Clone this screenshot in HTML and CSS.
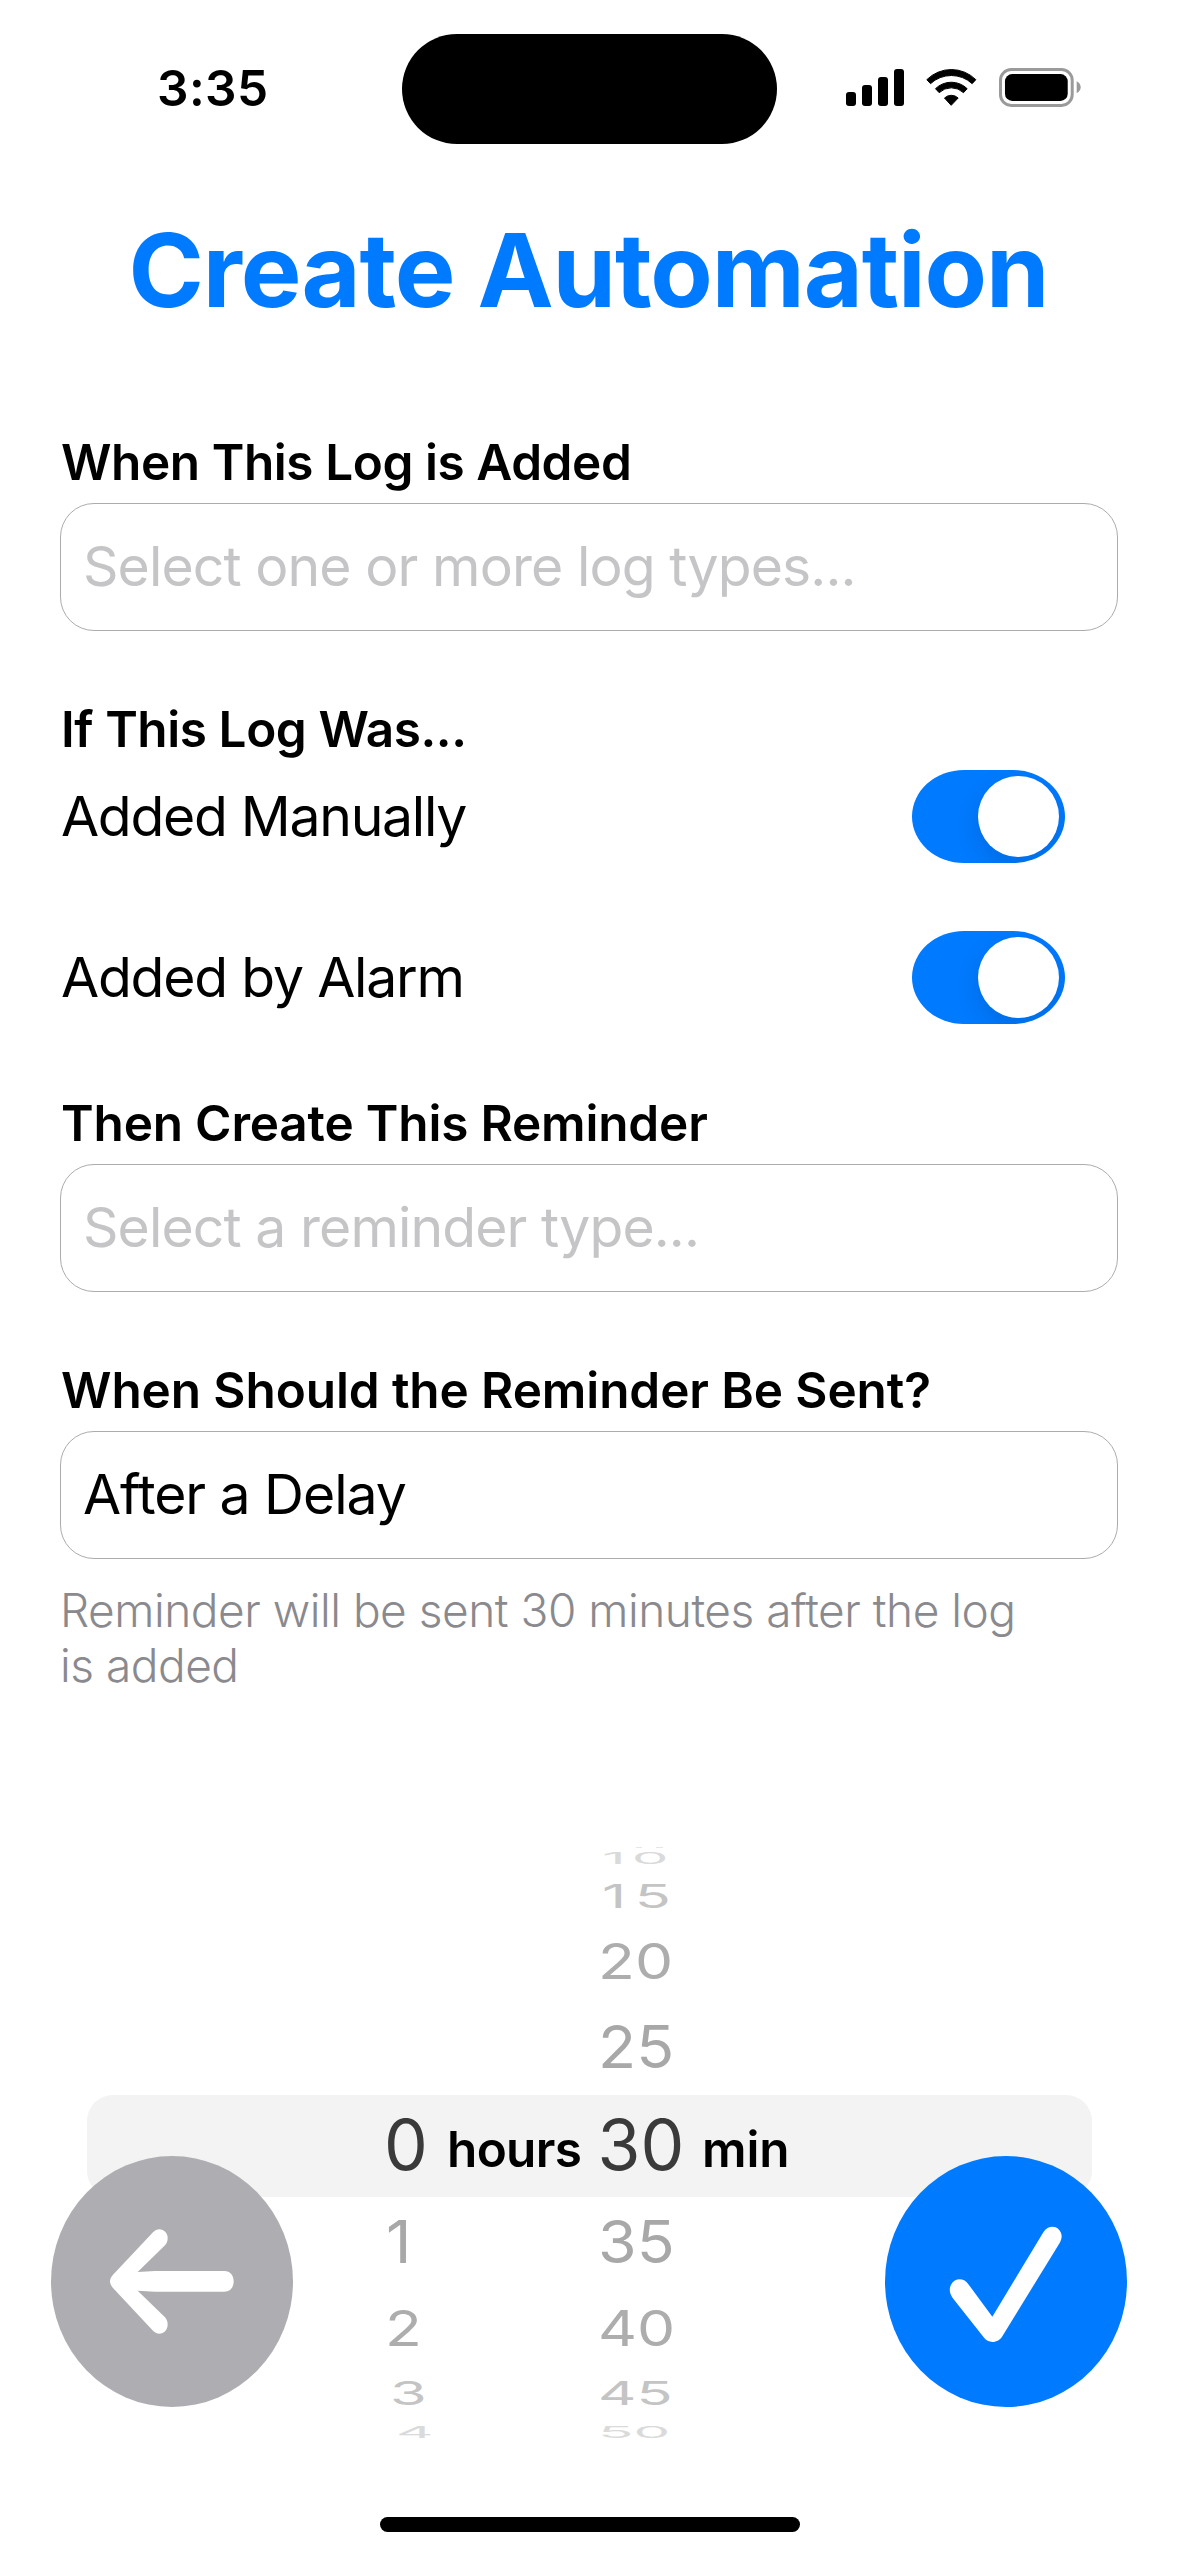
FILE: index.html
```html
<!DOCTYPE html>
<html lang="en">
<head>
<meta charset="utf-8">
<title>Create Automation</title>
<link rel="stylesheet" href="styles.css">
</head>
<body>
<div class="screen">
  <header class="status">
    <span class="time">3:35</span>
    <span class="island"></span>
    <span class="indicators">
      <svg class="signal" viewBox="138 87 174 111" aria-hidden="true">
        <rect x="138" y="156" width="30" height="42" rx="9"/>
        <rect x="186" y="135" width="30" height="63" rx="9"/>
        <rect x="234" y="111" width="30" height="87" rx="9"/>
        <rect x="282" y="87" width="30" height="111" rx="9"/>
      </svg>
      <svg class="wifi" viewBox="379 87 152 111" aria-hidden="true">
        <path d="M381 119A104 104 0 0 1 528 119L517 131A92 92 0 0 0 392 131Z"/>
        <path d="M407 146A68 68 0 0 1 502 146L491 158A53 53 0 0 0 418 158Z"/>
        <path d="M434 174A30 30 0 0 1 475 174L454 196Z"/>
      </svg>
      <svg class="battery" viewBox="597 84 247 117" aria-hidden="true">
        <rect class="battery-case" x="601.5" y="88.5" width="216" height="108" rx="32"/>
        <rect x="615" y="102" width="189" height="81" rx="22"/>
        <path class="battery-nub" d="M831 124C839 128 843 135 843 142C843 149 839 156 831 160Z"/>
      </svg>
    </span>
  </header>

  <h1 class="title">Create Automation</h1>

  <main class="form">
    <section class="group">
      <h2 class="label log">When This Log is Added</h2>
      <div class="field placeholder">Select one or more log types...</div>
    </section>
    <section class="group">
      <h2 class="label log">If This Log Was...</h2>
      <div class="row"><span>Added Manually</span><span class="toggle"><span class="knob"></span></span></div>
      <div class="row"><span>Added by Alarm</span><span class="toggle"><span class="knob"></span></span></div>
    </section>
    <section class="group">
      <h2 class="label">Then Create This Reminder</h2>
      <div class="field placeholder">Select a reminder type...</div>
    </section>
    <section class="group">
      <h2 class="label sent">When Should the Reminder Be Sent?</h2>
      <div class="field delay">After a Delay</div>
      <p class="help">Reminder will be sent 30 minutes after the log<br>is added</p>
    </section>
  </main>

  <section class="picker">
    <div class="band"></div>
    <div class="wheel hours">
      <div class="slot s0"><span>0</span></div>
      <div class="slot s1"><span>1</span></div>
      <div class="slot s2"><span>2</span></div>
      <div class="slot s3"><span>3</span></div>
      <div class="slot s4"><span>4</span></div>
    </div>
    <div class="unit">hours</div>
    <div class="wheel minutes">
      <div class="slot s4 teen"><span>10</span></div>
      <div class="slot s3 teen"><span>15</span></div>
      <div class="slot s2"><span>20</span></div>
      <div class="slot s1"><span>25</span></div>
      <div class="slot s0"><span>30</span></div>
      <div class="slot s1"><span>35</span></div>
      <div class="slot s2"><span>40</span></div>
      <div class="slot s3"><span>45</span></div>
      <div class="slot s4"><span>50</span></div>
    </div>
    <div class="unit min">min</div>
  </section>

  <svg class="button back" viewBox="63 228 726 753" role="img" aria-label="Back">
    <ellipse cx="426" cy="604.5" rx="363" ry="376.5"/>
    <path d="M369 457C387 438 413 452 413 474C413 484 410 490 405 496L323 576L375 573H583C601 573 611 586 611 604C611 622 601 635 583 635H375L323 632L405 712C410 718 413 724 413 734C413 757 387 771 369 752L249 624C243 617 240 611 240 604C240 597 243 591 249 584Z"/>
  </svg>
  <svg class="button confirm" viewBox="75 228 726 753" role="img" aria-label="Confirm">
    <ellipse cx="438" cy="604.5" rx="363" ry="376.5"/>
    <path d="M550 457C562 437 584 437 595 447C607 459 608 472 599 489L428 767C415 791 384 791 371 772L278 654C268 640 267 626 273 614C284 594 310 592 324 611L397 710Z"/>
  </svg>
  <div class="home"></div>
</div>
</body>
</html>
```
FILE: styles.css
```css
* {
  box-sizing: border-box;
}

body {
  margin: 0;
  background: #fff;
  color: #000;
  font-family: Inter, "Liberation Sans", sans-serif;
}

.screen {
  position: relative;
  width: 1179px;
  height: 2556px;
  overflow: hidden;
}

/* Status bar */
.status {
  display: grid;
  grid-template-columns: 401.5px 375.5px 402px;
  height: 209px;
  padding-top: 33.5px;
  align-items: start;
}

.time {
  padding-left: 157px;
  font-size: 49.5px;
  font-weight: 600;
  line-height: 60px;
  letter-spacing: 0.4px;
  margin-top: 24.5px;
}

.island {
  height: 110.5px;
  border-radius: 56px;
  background: #000;
}

.indicators {
  display: flex;
  align-items: center;
  gap: 22px;
  margin: 34.5px 0 0 69px;
}

.signal { width: 58px; height: 37px; }
.wifi { width: 51px; height: 37px; }
.battery { width: 82px; height: 39px; }

.wifi path {
  stroke: #000;
  stroke-width: 3;
  stroke-linejoin: round;
}

.battery .battery-case {
  fill: none;
  stroke: #9a9a9a;
  stroke-width: 9;
}

.battery-nub { fill: #9a9a9a; }

.title {
  margin: 0;
  padding-right: 2px;
  color: #007aff;
  font-size: 102px;
  font-weight: 700;
  line-height: 122px;
  letter-spacing: -1.1px;
  text-align: center;
}

/* Form */
.form {
  display: flex;
  flex-direction: column;
  gap: 69px;
  padding: 101px 61px 0 60px;
  height: 1514px;
}

.label {
  margin: 0 0 11px 1px;
  font-size: 49.5px;
  font-weight: 600;
  line-height: 60px;
  letter-spacing: -0.18px;
}

.label.log { letter-spacing: -0.43px; }
.label.sent { letter-spacing: -0.1px; }

.field {
  height: 128px;
  margin-bottom: -1px;
  padding-left: 22px;
  border: 1px solid #acacaf;
  border-radius: 34px;
  font-size: 55.3px;
  line-height: 124px;
  letter-spacing: -0.9px;
}

.field.delay { letter-spacing: -1.05px; }
.placeholder { color: #c5c5c7; }

.row {
  display: flex;
  justify-content: space-between;
  height: 93px;
  padding: 0 53px 0 1px;
  font-size: 55.3px;
  line-height: 91px;
  letter-spacing: -1.28px;
}

.row + .row {
  margin-top: 68px;
  letter-spacing: -1.2px;
}

.toggle {
  width: 153px;
  height: 93px;
  padding: 6px 6px 6px 66px;
  border-radius: 52px / 46.5px;
  background: #007aff;
  overflow: hidden;
}

.knob {
  display: block;
  width: 81px;
  height: 81px;
  border-radius: 50%;
  background: #fff;
  box-shadow: 0 9px 24px rgba(0, 0, 0, 0.12);
}

.help {
  margin: 25px 0 0;
  color: #8a8a8e;
  font-size: 46px;
  font-weight: 300;
  line-height: 55px;
  letter-spacing: -0.48px;
}

/* Duration picker */
.picker {
  position: relative;
  display: grid;
  grid-template-columns: 63px 150.5px 104.5px 200px;
  height: 600px;
  padding-left: 384px;
}

.band {
  position: absolute;
  left: 87px;
  top: 250px;
  width: 1005px;
  height: 102px;
  border-radius: 26px;
  background: #f3f3f3;
}

.wheel,
.unit {
  position: relative;
}

.hours { padding-top: 248.6px; }

.minutes::before {
  content: "";
  position: absolute;
  left: 38px;
  top: 2px;
  width: 27px;
  height: 1px;
  background: linear-gradient(90deg, #e6e6e6 6px, transparent 6px 20px, #e6e6e6 20px);
}

.slot {
  display: flex;
  align-items: center;
  font-size: 69.5px;
}

.slot span {
  line-height: 0;
  transform-origin: left center;
}

.s0 { height: 102px; color: #3a3a3a; }
.s1 { height: 93px; color: #a8a8a8; }
.s2 { height: 78.6px; color: #adadad; }
.s3 { height: 52px; color: #c4c4c4; }
.s4 { height: 25px; color: #dadada; }

.s1 span { transform: scale(0.9, 0.85); }
.s2 span { transform: scale(0.87, 0.71); }
.s3 span { transform: scale(0.855, 0.47); }
.s4 span { transform: scale(0.84, 0.235); }

.s3.teen { padding-left: 4px; letter-spacing: 10px; }
.s4.teen { padding-left: 4px; letter-spacing: 7px; }

.hours .s1 { padding-left: 2px; }
.hours .s2 { padding-left: 1px; }
.hours .s3 { padding-left: 6px; }
.hours .s4 { padding-left: 12px; }

.unit {
  padding-top: 253px;
  font-size: 49.5px;
  font-weight: 600;
  line-height: 102px;
  letter-spacing: -0.68px;
}

.unit.min { letter-spacing: -0.1px; }

/* Floating controls */
.button {
  position: absolute;
  top: 2156px;
  width: 242px;
  height: 251px;
}

.button path { fill: #fff; }
.back { left: 51px; fill: #aeaeb2; }
.confirm { left: 885px; fill: #007aff; }

.home {
  position: absolute;
  left: 380px;
  top: 2517px;
  width: 420px;
  height: 15px;
  border-radius: 8px;
  background: #000;
}
```
